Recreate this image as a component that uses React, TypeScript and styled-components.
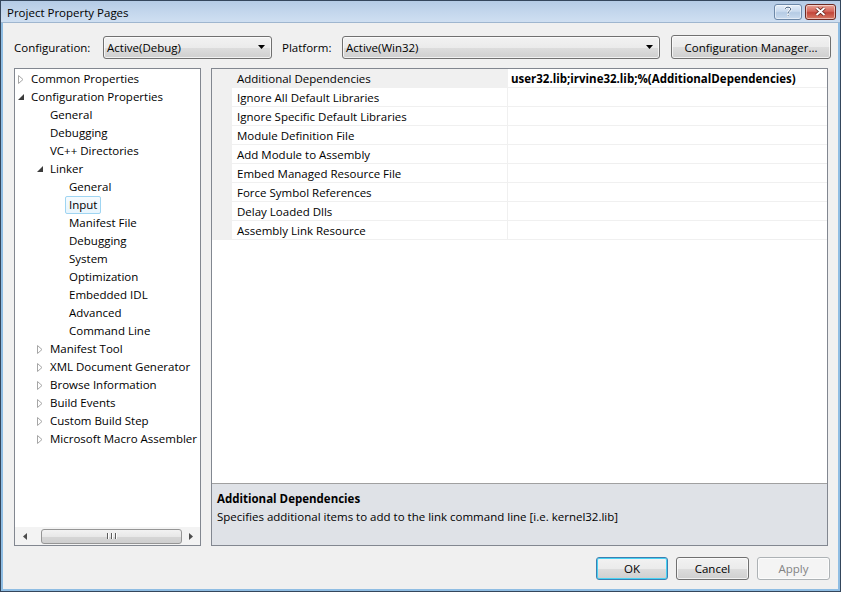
import React from 'react';
import styled, { createGlobalStyle } from 'styled-components';

const GlobalStyle = createGlobalStyle`
  html, body {
    margin: 0;
    padding: 0;
    background: #f0f0f0;
  }
  * {
    box-sizing: border-box;
  }
`;

const FONT = `"Segoe UI", "Open Sans", "Liberation Sans", sans-serif`;

interface TreeItem {
    label: string;
    level: number;
    expander: 'none' | 'open' | 'closed';
    selected?: boolean;
}

const treeItems: TreeItem[] = [
    { label: 'Common Properties', level: 0, expander: 'closed' },
    { label: 'Configuration Properties', level: 0, expander: 'open' },
    { label: 'General', level: 1, expander: 'none' },
    { label: 'Debugging', level: 1, expander: 'none' },
    { label: 'VC++ Directories', level: 1, expander: 'none' },
    { label: 'Linker', level: 1, expander: 'open' },
    { label: 'General', level: 2, expander: 'none' },
    { label: 'Input', level: 2, expander: 'none', selected: true },
    { label: 'Manifest File', level: 2, expander: 'none' },
    { label: 'Debugging', level: 2, expander: 'none' },
    { label: 'System', level: 2, expander: 'none' },
    { label: 'Optimization', level: 2, expander: 'none' },
    { label: 'Embedded IDL', level: 2, expander: 'none' },
    { label: 'Advanced', level: 2, expander: 'none' },
    { label: 'Command Line', level: 2, expander: 'none' },
    { label: 'Manifest Tool', level: 1, expander: 'closed' },
    { label: 'XML Document Generator', level: 1, expander: 'closed' },
    { label: 'Browse Information', level: 1, expander: 'closed' },
    { label: 'Build Events', level: 1, expander: 'closed' },
    { label: 'Custom Build Step', level: 1, expander: 'closed' },
    { label: 'Microsoft Macro Assembler', level: 1, expander: 'closed' },
];

const properties: { name: string; value?: string }[] = [
    { name: 'Additional Dependencies', value: 'user32.lib;irvine32.lib;%(AdditionalDependencies)' },
    { name: 'Ignore All Default Libraries' },
    { name: 'Ignore Specific Default Libraries' },
    { name: 'Module Definition File' },
    { name: 'Add Module to Assembly' },
    { name: 'Embed Managed Resource File' },
    { name: 'Force Symbol References' },
    { name: 'Delay Loaded Dlls' },
    { name: 'Assembly Link Resource' },
];

const Window = styled.div`
    width: 841px;
    height: 592px;
    display: flex;
    flex-direction: column;
    border: 1px solid #34465c;
    background: #8fbde3;
    font-family: ${FONT};
    font-size: 11.5px;
    color: #000;
    overflow: hidden;
`;

const TitleBar = styled.div`
    height: 22px;
    flex: none;
    display: flex;
    align-items: center;
    padding: 0 4px 0 6px;
    background: linear-gradient(to bottom, #b4cbe5 0%, #c3d6ec 50%, #cfdff1 100%);
    border-bottom: 1px solid #9fb6cf;
`;

const Title = styled.div`
    flex: 1;
    color: #000;
    margin-top: 1px;
`;

const CaptionButton = styled.div<{ $close?: boolean }>`
    width: ${(p) => (p.$close ? 31 : 28)}px;
    height: 16px;
    margin-left: 3px;
    border: 1px solid ${(p) => (p.$close ? '#6d2a22' : '#6c88a8')};
    border-radius: 3px;
    display: flex;
    align-items: center;
    justify-content: center;
    background: ${(p) =>
        p.$close
            ? 'linear-gradient(to bottom, #e8a597 0%, #d4665a 45%, #c2463a 55%, #d77b66 100%)'
            : 'linear-gradient(to bottom, #e4eef9 0%, #c9daee 45%, #b5cbe4 55%, #cadbee 100%)'};
    box-shadow: inset 0 0 0 1px rgba(255, 255, 255, 0.5);
`;

const Frame = styled.div`
    flex: 1;
    display: flex;
    padding: 0 2px 2px 2px;
    min-height: 0;
    min-width: 0;
`;

const Body = styled.div`
    flex: 1;
    display: flex;
    flex-direction: column;
    background: #f0f0f0;
    padding: 12px 8px 9px 11px;
    min-height: 0;
    min-width: 0;
    overflow: hidden;
`;

const TopRow = styled.div`
    display: flex;
    align-items: center;
    height: 24px;
    white-space: nowrap;
`;

const FieldLabel = styled.span<{ $width: number }>`
    width: ${(p) => p.$width}px;
    flex: none;
`;

const Combo = styled.div<{ $width: number }>`
    width: ${(p) => p.$width}px;
    flex: none;
    height: 23px;
    border: 1px solid #707070;
    border-radius: 3px;
    background: linear-gradient(to bottom, #f2f2f2 0%, #ebebeb 50%, #dddddd 51%, #cfcfcf 100%);
    box-shadow: inset 0 0 0 1px rgba(255, 255, 255, 0.7);
    display: flex;
    align-items: center;
    padding: 0 6px 0 3px;
    margin-right: 10px;
`;

const ComboText = styled.span`
    flex: 1;
`;

const Button = styled.div<{ $width: number; $default?: boolean; $disabled?: boolean }>`
    width: ${(p) => p.$width}px;
    flex: none;
    height: 23px;
    border: 1px solid ${(p) => (p.$default ? '#3c7fb1' : p.$disabled ? '#adb2b5' : '#707070')};
    border-radius: 3px;
    display: flex;
    align-items: center;
    justify-content: center;
    color: ${(p) => (p.$disabled ? '#838383' : '#000')};
    background: ${(p) =>
        p.$disabled
            ? '#f4f4f4'
            : 'linear-gradient(to bottom, #f2f2f2 0%, #ebebeb 50%, #dddddd 51%, #cfcfcf 100%)'};
    box-shadow: inset 0 0 0 1px ${(p) => (p.$default ? '#48d2f3' : 'rgba(255, 255, 255, 0.7)')};
`;

const ManagerButton = styled(Button)`
    height: 24px;
    margin-left: 1px;
`;

const Main = styled.div`
    flex: 1;
    display: flex;
    gap: 10px;
    margin-top: 9px;
    margin-right: 2px;
    min-height: 0;
`;

const TreePanel = styled.div`
    width: 187px;
    flex: none;
    display: flex;
    flex-direction: column;
    border: 1px solid #828790;
    background: #fff;
`;

const TreeList = styled.div`
    flex: 1;
    padding-top: 1px;
    overflow: hidden;
`;

const TreeRow = styled.div<{ $level: number }>`
    height: 18px;
    display: flex;
    align-items: center;
    padding-left: ${(p) => 3 + p.$level * 19}px;
    white-space: nowrap;
`;

const Expander = styled.span`
    width: 9px;
    flex: none;
    display: flex;
    align-items: center;
`;

const TreeLabel = styled.span<{ $selected?: boolean }>`
    height: 18px;
    line-height: 16px;
    padding: 0 3px;
    border: 1px solid ${(p) => (p.$selected ? '#9fd5f2' : 'transparent')};
    border-radius: 2px;
    background: ${(p) => (p.$selected ? 'linear-gradient(to bottom, #f6fbfe, #e8f5fd)' : 'transparent')};
`;

const HScroll = styled.div`
    height: 18px;
    flex: none;
    display: flex;
    align-items: center;
    background: #f3f3f3;
    padding: 0 1px;
`;

const ScrollArrow = styled.div`
    width: 17px;
    height: 17px;
    flex: none;
    display: flex;
    align-items: center;
    justify-content: center;
`;

const ScrollTrack = styled.div`
    flex: 1;
    height: 17px;
    display: flex;
    align-items: center;
    padding-left: 8px;
`;

const Thumb = styled.div`
    flex: 1;
    height: 15px;
    border: 1px solid #959595;
    border-radius: 3px;
    background: linear-gradient(to bottom, #f2f2f2 0%, #e8e8e8 50%, #d6d6d6 51%, #cfcfcf 100%);
    display: flex;
    align-items: center;
    justify-content: center;
    gap: 1px;
`;

const Grip = styled.span`
    width: 1px;
    height: 6px;
    background: #5b5b5b;
    box-shadow: 1px 0 0 #fff;
    margin: 0 1px;
`;

const PropPanel = styled.div`
    flex: 1;
    display: flex;
    flex-direction: column;
    border: 1px solid #828790;
    background: #fff;
    min-width: 0;
`;

const Grid = styled.div`
    flex: 1;
`;

const PropRow = styled.div`
    display: flex;
    height: 19px;
`;

const Gutter = styled.div`
    width: 20px;
    flex: none;
    background: #f0f0f0;
`;

const NameCell = styled.div<{ $selected?: boolean }>`
    width: 276px;
    flex: none;
    padding-left: 5px;
    line-height: 20px;
    overflow: hidden;
    border-bottom: 1px solid #f0f0f0;
    border-right: 1px solid #f0f0f0;
    background: ${(p) => (p.$selected ? '#f0f0f0' : '#fff')};
    white-space: nowrap;
`;

const ValueCell = styled.div`
    flex: 1;
    padding-left: 3px;
    line-height: 20px;
    overflow: hidden;
    font-weight: bold;
    border-bottom: 1px solid #f0f0f0;
    white-space: nowrap;
`;

const Description = styled.div`
    height: 62px;
    flex: none;
    border-top: 1px solid #a0a0a0;
    background: #dfe2e7;
    padding: 6px 5px 4px;
    line-height: 18px;
`;

const DescTitle = styled.div`
    font-weight: bold;
`;

const Footer = styled.div`
    display: flex;
    justify-content: flex-end;
    gap: 8px;
    margin-top: 11px;
`;

const ComboArrow = () => (
    <svg width="7" height="4" viewBox="0 0 7 4">
        <polygon points="0,0 7,0 3.5,4" fill="#000" />
    </svg>
);

const TreeExpander: React.FC<{ kind: TreeItem['expander'] }> = ({ kind }) => {
    if (kind === 'open') {
        return (
            <svg width="6" height="6" viewBox="0 0 6 6">
                <polygon points="6,0 6,6 0,6" fill="#3c3c3c" />
            </svg>
        );
    }
    if (kind === 'closed') {
        return (
            <svg width="6" height="9" viewBox="0 0 6 9">
                <polygon points="0.5,0.5 5,4.5 0.5,8.5" fill="#fff" stroke="#a6a6a6" />
            </svg>
        );
    }
    return null;
};

const App: React.FC = () => {
    return (
        <>
            <GlobalStyle />
            <Window>
                <TitleBar>
                    <Title>Project Property Pages</Title>
                    <CaptionButton>
                        <svg width="8" height="11" viewBox="0 0 8 11">
                            <path d="M1.2 3 C1.2 0.6 6.8 0.6 6.8 3 C6.8 5 4 5 4 7.2" fill="none" stroke="#fff" strokeWidth="2.2" />
                            <path d="M1.2 3 C1.2 0.6 6.8 0.6 6.8 3 C6.8 5 4 5 4 7.2" fill="none" stroke="#3d5a7c" strokeWidth="1" />
                            <rect x="3.3" y="8.6" width="1.6" height="1.6" fill="#3d5a7c" stroke="#fff" strokeWidth="0.6" />
                        </svg>
                    </CaptionButton>
                    <CaptionButton $close>
                        <svg width="11" height="9" viewBox="0 0 11 9">
                            <path d="M1.5 1 L9.5 8 M9.5 1 L1.5 8" stroke="#5a1e16" strokeWidth="3.4" />
                            <path d="M1.5 1 L9.5 8 M9.5 1 L1.5 8" stroke="#fff" strokeWidth="2" />
                        </svg>
                    </CaptionButton>
                </TitleBar>
                <Frame>
                    <Body>
                        <TopRow>
                            <FieldLabel $width={89}>Configuration:</FieldLabel>
                            <Combo $width={169}>
                                <ComboText>Active(Debug)</ComboText>
                                <ComboArrow />
                            </Combo>
                            <FieldLabel $width={60}>Platform:</FieldLabel>
                            <Combo $width={318}>
                                <ComboText>Active(Win32)</ComboText>
                                <ComboArrow />
                            </Combo>
                            <ManagerButton $width={160}>Configuration Manager...</ManagerButton>
                        </TopRow>
                        <Main>
                            <TreePanel>
                                <TreeList>
                                    {treeItems.map((item, idx) => (
                                        <TreeRow key={idx} $level={item.level}>
                                            <Expander>
                                                <TreeExpander kind={item.expander} />
                                            </Expander>
                                            <TreeLabel $selected={item.selected}>{item.label}</TreeLabel>
                                        </TreeRow>
                                    ))}
                                </TreeList>
                                <HScroll>
                                    <ScrollArrow>
                                        <svg width="4" height="7" viewBox="0 0 4 7">
                                            <polygon points="4,0 4,7 0,3.5" fill="#4d4d4d" />
                                        </svg>
                                    </ScrollArrow>
                                    <ScrollTrack>
                                        <Thumb>
                                            <Grip />
                                            <Grip />
                                            <Grip />
                                        </Thumb>
                                    </ScrollTrack>
                                    <ScrollArrow>
                                        <svg width="4" height="7" viewBox="0 0 4 7">
                                            <polygon points="0,0 4,3.5 0,7" fill="#4d4d4d" />
                                        </svg>
                                    </ScrollArrow>
                                </HScroll>
                            </TreePanel>
                            <PropPanel>
                                <Grid>
                                    {properties.map((prop, idx) => (
                                        <PropRow key={prop.name}>
                                            <Gutter />
                                            <NameCell $selected={idx === 0}>{prop.name}</NameCell>
                                            <ValueCell>{prop.value}</ValueCell>
                                        </PropRow>
                                    ))}
                                </Grid>
                                <Description>
                                    <DescTitle>Additional Dependencies</DescTitle>
                                    <div>Specifies additional items to add to the link command line [i.e. kernel32.lib]</div>
                                </Description>
                            </PropPanel>
                        </Main>
                        <Footer>
                            <Button $width={72} $default>OK</Button>
                            <Button $width={73}>Cancel</Button>
                            <Button $width={73} $disabled>Apply</Button>
                        </Footer>
                    </Body>
                </Frame>
            </Window>
        </>
    );
};

export default App;
